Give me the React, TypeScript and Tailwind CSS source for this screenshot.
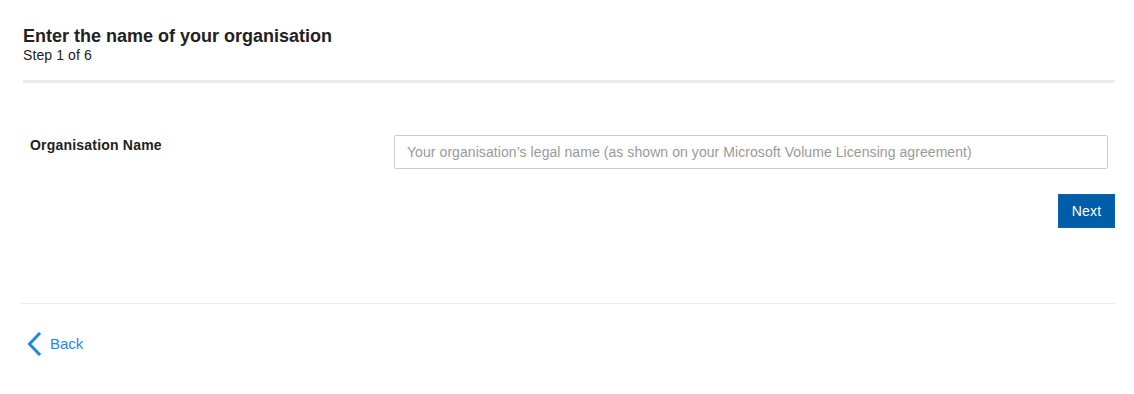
import { useState } from 'react'

function ChevronLeft() {
  return (
    <svg width="16" height="24" viewBox="0 0 16 24" fill="none" aria-hidden="true">
      <path
        d="M13 2 L3.5 12 L13 22"
        stroke="#1e88e5"
        strokeWidth="3"
        strokeLinecap="square"
        strokeLinejoin="miter"
      />
    </svg>
  )
}

export default function App() {
  const [orgName, setOrgName] = useState('')

  return (
    <div className="min-h-[394px] bg-white font-['Liberation_Sans',Arial,sans-serif] text-[#222]">
      <div className="ml-[23px] mr-[19px]">
        <header className="pt-[26px]">
          <h1 className="text-[18px] font-bold leading-[20px] text-[#222]">
            Enter the name of your organisation
          </h1>
          <p className="mt-[1px] text-[14px] leading-[16px] tracking-[0.1px]">Step 1 of 6</p>
        </header>

        <div className="mt-[17px] h-[3px] bg-[#ececec]" />

        <form
          className="pt-[52px]"
          onSubmit={(e) => e.preventDefault()}
        >
          <div className="flex items-start px-[7px]">
            <label
              htmlFor="org-name"
              className="w-[364px] shrink-0 pt-[2px] text-[14px] font-bold leading-[16px] tracking-[0.2px] text-[#222]"
            >
              Organisation Name
            </label>
            <input
              id="org-name"
              type="text"
              value={orgName}
              onChange={(e) => setOrgName(e.target.value)}
              placeholder="Your organisation’s legal name (as shown on your Microsoft Volume Licensing agreement)"
              className="h-[34px] min-w-0 flex-1 rounded-[2px] border border-[#ccc] px-[12px] text-[14px] tracking-[0.07px] text-[#222] outline-none placeholder:text-[#999]"
            />
          </div>

          <div className="mt-[25px] flex justify-end">
            <button
              type="submit"
              className="h-[34px] w-[57px] border border-[#0a64b4] bg-[#005da8] text-[14px] tracking-[0.2px] text-white"
            >
              Next
            </button>
          </div>
        </form>

        <div className="mt-[75px] ml-[-1px] h-px bg-[#ececec]" />

        <a href="#" className="mt-[28px] ml-[3px] inline-flex items-center gap-[8px] text-[15px] text-[#1e88e5]">
          <ChevronLeft />
          <span>Back</span>
        </a>
      </div>
    </div>
  )
}
